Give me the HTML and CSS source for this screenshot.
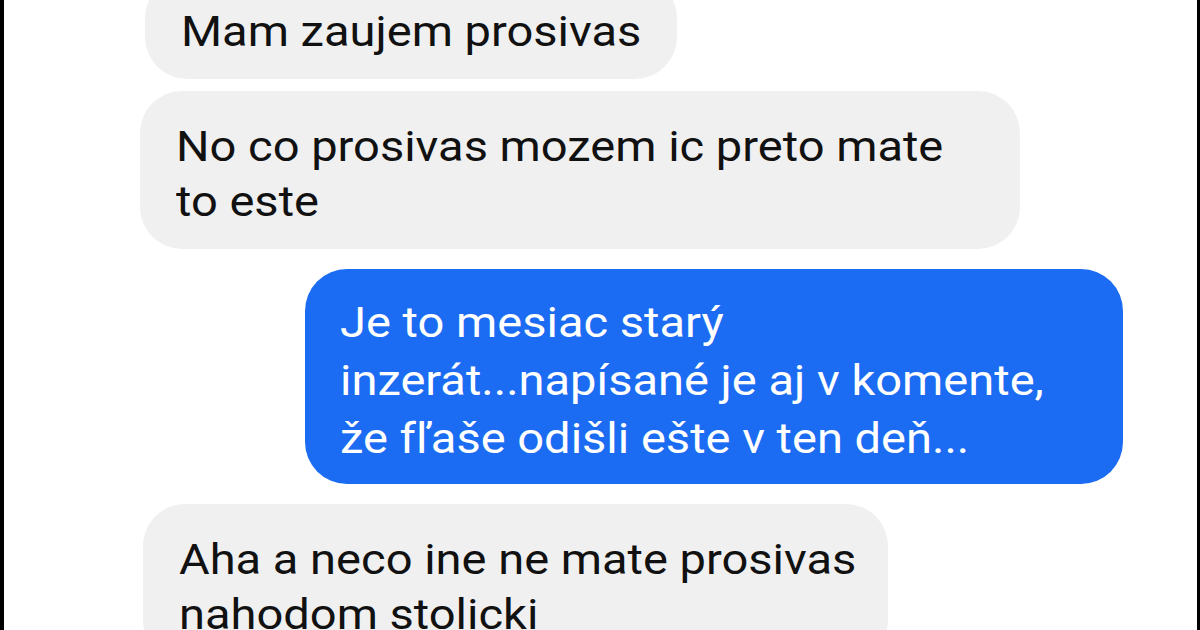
FILE: index.html
```html
<!DOCTYPE html>
<html lang="sk">
<head>
<meta charset="utf-8">
<title>Chat</title>
<link rel="stylesheet" href="styles.css">
</head>
<body>
<div class="frame">
  <div class="chat">
    <div class="msg msg--in msg--first">
      <div class="bubble bubble--gray bubble--w1"><span class="txt">Mam zaujem prosivas</span></div>
    </div>
    <div class="msg msg--in msg--tight">
      <div class="bubble bubble--gray bubble--w2"><span class="txt">No co prosivas mozem ic preto mate<br>to este</span></div>
    </div>
    <div class="msg msg--out">
      <div class="bubble bubble--blue bubble--w3"><span class="txt">Je to mesiac starý<br>inzerát...napísané je aj v komente,<br>že fľaše odišli ešte v ten deň...</span></div>
    </div>
    <div class="msg msg--in">
      <div class="bubble bubble--gray bubble--w4"><span class="txt">Aha a neco ine ne mate prosivas<br>nahodom stolicki</span></div>
    </div>
  </div>
</div>
</body>
</html>
```
FILE: styles.css
```css
* { box-sizing: border-box; }
html, body { margin: 0; padding: 0; }
body {
  width: 1200px;
  height: 630px;
  overflow: hidden;
  background: #ffffff;
  font-family: Roboto, "Noto Sans", sans-serif;
}
.frame {
  height: 630px;
  border-left: 4px solid #000;
  border-right: 3px solid #000;
  background: #fff;
  overflow: hidden;
}
.chat {
  display: flex;
  flex-direction: column;
  margin-top: -24px;
}
.msg {
  display: flex;
  margin-top: 20px;
}
.msg--first { margin-top: 0; }
.msg--tight { margin-top: 12px; }
.msg--in { justify-content: flex-start; padding-left: 139px; }
.msg--out { justify-content: flex-end; padding-right: 74px; }
.bubble {
  font-size: 42px;
  line-height: 55px;
  border-radius: 42px;
  padding: 28px 36px 20px 36px;
  white-space: nowrap;
}
.txt {
  display: inline-block;
  vertical-align: top;
  transform: scaleX(1.12);
  transform-origin: 0 50%;
}
.bubble--gray {
  background: #f0f0f0;
  color: #111111;
}
.bubble--blue {
  background: #1b6cf2;
  color: #ffffff;
  line-height: 58px;
  padding: 25px 35px 16px 35px;
}
.bubble--w1 { width: 532px; margin-left: 2px; }
.bubble--w2 { width: 880px; margin-left: -3px; }
.bubble--w3 { width: 818px; }
.bubble--w4 { width: 745px; }
```
